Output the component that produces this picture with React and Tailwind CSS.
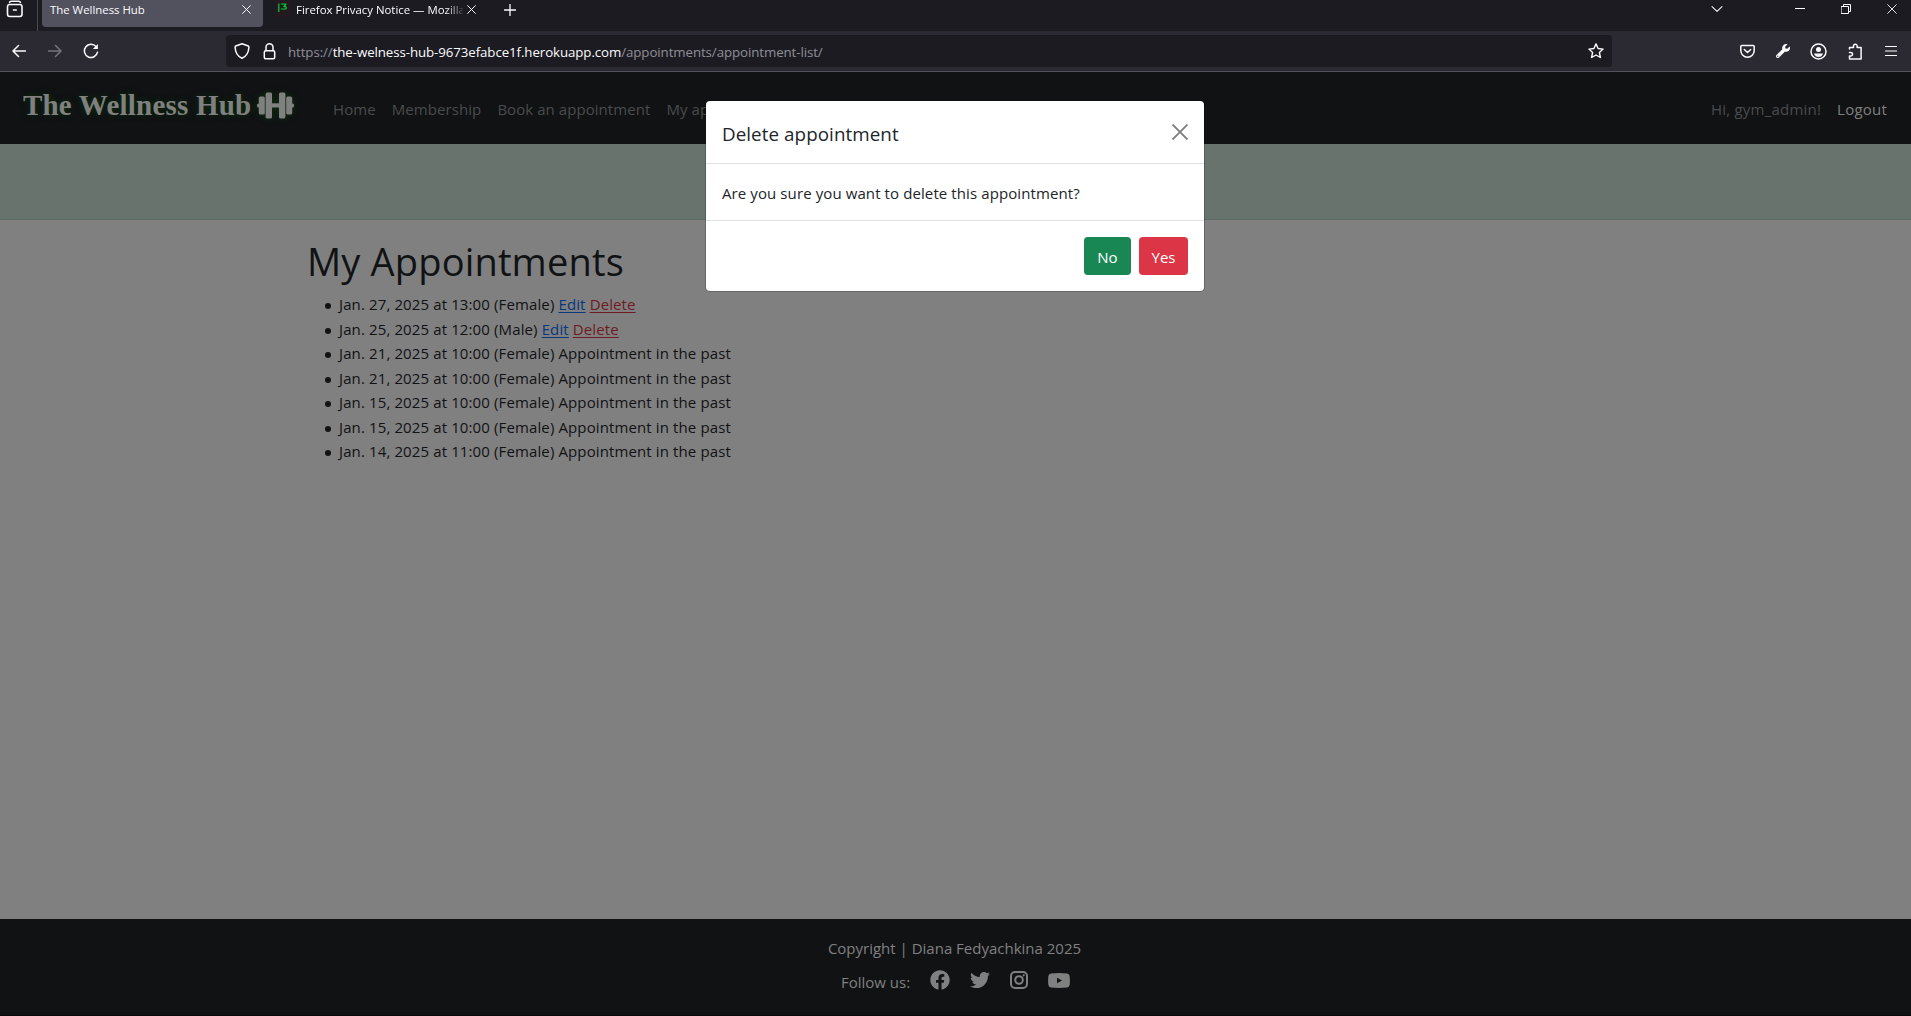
import { FaFacebook, FaTwitter, FaWrench } from "react-icons/fa";

const appointments = [
  { when: "Jan. 27, 2025 at 13:00 (Female)", open: true },
  { when: "Jan. 25, 2025 at 12:00 (Male)", open: true },
  { when: "Jan. 21, 2025 at 10:00 (Female)" },
  { when: "Jan. 21, 2025 at 10:00 (Female)" },
  { when: "Jan. 15, 2025 at 10:00 (Female)" },
  { when: "Jan. 15, 2025 at 10:00 (Female)" },
  { when: "Jan. 14, 2025 at 11:00 (Female)" },
];

function Icon({ children, className = "size-4", box = 16, width = 1.4 }) {
  return (
    <svg
      className={`shrink-0 ${className}`}
      viewBox={`0 0 ${box} ${box}`}
      fill="none"
      stroke="currentColor"
      strokeWidth={width}
      strokeLinecap="round"
      strokeLinejoin="round"
    >
      {children}
    </svg>
  );
}

function Cross({ className = "size-[9px]", width = 1.1 }) {
  return (
    <Icon className={className} box={10} width={width}>
      <path d="M0.7 0.7l8.6 8.6M9.3 0.7L0.7 9.3" />
    </Icon>
  );
}

function Dumbbell() {
  return (
    <svg className="h-[27px] w-[37px] shrink-0 [filter:drop-shadow(0_0_3px_#0a300a)]" viewBox="0 0 37 27" fill="currentColor">
      <rect x="0" y="11.500" width="3" height="4" rx="1.500" />
      <rect x="34" y="11.500" width="3" height="4" rx="1.500" />
      <rect x="13" y="11.300" width="11" height="4.200" />
      <rect x="1.800" y="4.500" width="6" height="18" rx="1.500" />
      <rect x="29.200" y="4.500" width="6" height="18" rx="1.500" />
      <rect x="8.600" y=".5" width="6.400" height="26" rx="1.500" />
      <rect x="22" y=".5" width="6.400" height="26" rx="1.500" />
    </svg>
  );
}

function TabBar() {
  return (
    <div className="flex h-[31px] shrink-0 items-start bg-[#1c1b22] text-[11.400px] text-[#fbfbfe]">
      <div className="h-[31px] w-[38px] shrink-0 border-r border-[#4a4953] pl-[6px]">
        <Icon className="size-[18px]" box={18} width={1.6}>
          <path d="M3.600 2.400q.3-1.200 1.500-1.200h7.800q1.200 0 1.500 1.200" />
          <rect x="1.500" y="4.500" width="14.500" height="12" rx="2.200" />
          <path d="M7.500 10h2.800" />
        </Icon>
      </div>
      <div className="ml-1 flex h-[27px] w-[221px] shrink-0 items-start justify-between rounded-b-[4px] bg-[#52525e] pr-[12px] pl-2">
        <span className="leading-[19px]">The Wellness Hub</span>
        <Cross className="mt-[5px] size-[9px]" />
      </div>
      <div className="ml-3 flex w-[202px] shrink-0 items-start">
        <div className="flex h-[17px] w-[15px] justify-center bg-[#221a1e]">
          <Icon className="mt-[3px] size-[9px]" box={9} width={1.2}>
            <path stroke="#00d230" d="M.8.500v8.500M3 1h5L5.800 3.600h1.500q1 0 1 1.200T7 6H3" strokeLinecap="butt" />
          </Icon>
        </div>
        <span className="ml-[6px] w-[167px] shrink-0 overflow-hidden leading-[19px] whitespace-nowrap [mask-image:linear-gradient(to_right,black_150px,transparent_170px)]">
          Firefox Privacy Notice — Mozilla
        </span>
        <Cross className="mt-[5px] ml-[4px] size-[9px]" />
      </div>
      <Icon className="mt-1 ml-[27px] size-3" box={12} width={1.3}>
        <path d="M6 .5v11M.5 6h11" />
      </Icon>
      <div className="ml-auto flex items-start pr-[14px]">
        <Icon className="mt-[5px] h-2 w-3" box={12} width={1.6}>
          <path d="M-1.500 2.500L6 9.500l7.500-7" />
        </Icon>
        <div className="mt-2 ml-[72px] h-px w-[10px] bg-[#fbfbfe]" />
        <Icon className="mt-1 ml-9 size-[10px]" box={10} width={1}>
          <path d="M.5 2.500h7v7h-7zM2.500 2.500v-2h7v7h-2" strokeLinejoin="miter" />
        </Icon>
        <Cross className="mt-1 ml-9 size-[10px]" width={0.9} />
      </div>
    </div>
  );
}

function AddressBar() {
  return (
    <div className="flex h-10 shrink-0 items-center bg-[#2b2a33] pl-3 text-[#fbfbfe]">
      <Icon className="size-[14px]" box={14} width={1.5}>
        <path d="M13.500 7H1M6.500 1.500L1 7l5.500 5.500" />
      </Icon>
      <Icon className="ml-[22px] size-[14px] text-[#75747b]" box={14} width={1.5}>
        <path d="M.5 7H13M7.500 1.500L13 7l-5.500 5.500" />
      </Icon>
      <Icon className="ml-[21px] size-4" box={16} width={1.5}>
        <path d="M14.500 9.200A6.600 6.600 0 1 1 13 3.600" />
        <path d="M14.900 1v5h-5z" fill="currentColor" stroke="none" />
      </Icon>
      <div className="ml-[127px] flex h-8 w-[1386px] shrink-0 items-center rounded-[4px] bg-[#1c1b22] px-2">
        <Icon className="size-4" box={16} width={1.5}>
          <path d="M8 .8l6.300 2.200q.6.300.6 1C14.700 9.800 12 13.500 8 15.300 4 13.500 1.300 9.800 1.100 4q0-.7.6-1z" />
        </Icon>
        <Icon className="ml-[11px] size-[17px]" box={17} width={1.5}>
          <rect x="3.300" y="7.800" width="10.400" height="8" rx="1.500" />
          <path d="M5 7.500V4.300a3.500 3.500 0 0 1 7 0v3.200" />
        </Icon>
        <span className="mt-[3px] ml-[10px] text-[13.300px] tracking-[-0.09px] whitespace-nowrap text-[#8f8f98]">
          https://<span className="text-[#fbfbfe]">the-welness-hub-9673efabce1f.herokuapp.com</span>
          /appointments/appointment-list/
        </span>
        <Icon className="ml-auto size-4" box={16} width={1.4}>
          <path d="M8 .9l2.100 4.600 5 .6-3.700 3.400 1 5L8 12l-4.400 2.500 1-5L.9 6.100l5-.6z" />
        </Icon>
      </div>
      <div className="ml-auto flex items-center pr-[14px]">
        <Icon className="size-[15px]" box={15} width={1.5}>
          <path d="M1.800 1.500h11.400q1 0 1 1v4a6.700 6.700 0 0 1-13.400 0v-4q0-1 1-1z" />
          <path d="M4.300 5.500l3.200 3 3.200-3" />
        </Icon>
        <FaWrench className="ml-[21px] size-[14px]" />
        <Icon className="ml-5 size-[17px]" box={17} width={1.5}>
          <circle cx="8.500" cy="8.500" r="7.500" />
          <circle cx="8.500" cy="6.500" r="2.500" fill="currentColor" stroke="none" />
          <path d="M4 10.500h9q-1.200 3.500-4.500 3.500T4 10.500z" fill="currentColor" stroke="none" />
        </Icon>
        <Icon className="ml-5 size-[17px]" box={17} width={1.5}>
          <path d="M2.500 6V4.500h4V3a1.800 1.800 0 0 1 3.600 0v1.500h4v11.500H2.500v-3h1.300a1.700 1.700 0 0 0 0-3.500H2.500" />
        </Icon>
        <Icon className="ml-[21px] size-3" box={12} width={1.2}>
          <path d="M0 1.500h12M0 6h12M0 10.500h12" />
        </Icon>
      </div>
    </div>
  );
}

function SiteHeader() {
  return (
    <header className="flex h-[72px] shrink-0 items-center bg-[#101214] pr-6 pl-[23px] text-[15px] tracking-[0.08px] whitespace-nowrap text-[#4a4c4d]">
      <div className="mt-[-6px] flex w-[271px] items-center justify-between font-['Liberation_Serif',serif] text-[29px] leading-9 font-bold tracking-[0.2px] text-[#808080] [text-shadow:0_0_6px_#0a300a]">
        The Wellness Hub
        <Dumbbell />
      </div>
      <nav className="mt-[2px] ml-[39px] flex gap-4">
        <span>Home</span>
        <span>Membership</span>
        <span className="tracking-[0.06px]">Book an appointment</span>
        <span>My appointments</span>
      </nav>
      <div className="mt-[2px] ml-auto flex gap-4 tracking-[0.22px]">
        <span>Hi, gym_admin!</span>
        <span className="text-[#808080]">Logout</span>
      </div>
    </header>
  );
}

function DeleteDialog() {
  return (
    <div className="absolute top-[101px] left-[706px] w-[498px] rounded-[4px] bg-white text-[15px] text-[#212529] shadow-[0_0_0_1px_rgba(0,0,0,0.2)]">
      <div className="flex h-[63px] items-center justify-between border-b border-[#dee2e6] px-4">
        <h5 className="mt-[5px] text-[18.800px] tracking-[0.07px]">Delete appointment</h5>
        <Cross className="size-4 text-[#7f7f7f]" width={1.2} />
      </div>
      <p className="h-[57px] border-b border-[#dee2e6] px-4 pt-[17px] leading-6 tracking-[0.1px]">
        Are you sure you want to delete this appointment?
      </p>
      <div className="flex h-[70px] justify-end gap-2 px-4 pt-4 text-white">
        <button className="h-[38px] w-[47px] rounded-[4px] bg-[#198754] pt-[3px]">No</button>
        <button className="h-[38px] w-[49px] rounded-[4px] bg-[#dc3545] pt-[3px]">Yes</button>
      </div>
    </div>
  );
}

export default function App() {
  return (
    <div className="relative flex h-[1016px] w-[1911px] flex-col overflow-hidden bg-[#808080] font-['Open_Sans',sans-serif]">
      <TabBar />
      <AddressBar />
      <div className="h-px shrink-0 bg-[#52525e]" />
      <SiteHeader />
      <div className="h-[76px] shrink-0 border-b border-[#5c6b66] bg-[#69736d]" />
      <main className="flex-1 pt-[14px] pl-[307px] text-[#101214]">
        <h1 className="text-[38px] leading-[54px] tracking-[0.17px]">My Appointments</h1>
        <ul className="mt-1 pl-[18px] text-[15px] leading-[24.500px] tracking-[0.12px]">
          {appointments.map((item, i) => (
            <li
              key={i}
              className="before:mr-2 before:inline-block before:size-[6px] before:rounded-full before:bg-current before:align-[1px] before:content-['']"
            >
              {item.when}{" "}
              {item.open ? (
                <>
                  <a className="text-[#07377f] underline underline-offset-2">Edit</a>{" "}
                  <a className="text-[#6e1b23] underline underline-offset-2">Delete</a>
                </>
              ) : (
                "Appointment in the past"
              )}
            </li>
          ))}
        </ul>
      </main>
      <footer className="flex h-[97px] shrink-0 flex-col items-center border-b border-[#0a090c] bg-[#101214] pt-[17px] pr-[2px] text-[15px] text-[#808080]">
        <p className="leading-6">Copyright | Diana Fedyachkina 2025</p>
        <div className="mt-[8px] ml-[2px] flex h-6 items-center">
          <span className="mt-[4px]">Follow us:</span>
          <FaFacebook className="ml-5 size-5" />
          <FaTwitter className="ml-5 size-5" />
          <Icon className="ml-5 size-[18px]" box={18} width={2}>
            <rect x="1" y="1" width="16" height="16" rx="4" />
            <circle cx="9" cy="9" r="3.800" />
            <circle cx="13.700" cy="4.300" r="1.100" fill="currentColor" stroke="none" />
          </Icon>
          <svg className="ml-5 h-[15px] w-[22px]" viewBox="0 0 22 15">
            <path
              fill="currentColor"
              fillRule="evenodd"
              d="M3 .4Q11-.4 19 .4q2.300.3 2.600 2.600.6 4.500 0 9-.3 2.300-2.600 2.600-8 .8-16 0Q.7 14.300.4 12q-.6-4.500 0-9Q.700.700 3 .4zM9 4.700v5.600l5-2.800z"
            />
          </svg>
        </div>
      </footer>
      <DeleteDialog />
    </div>
  );
}
